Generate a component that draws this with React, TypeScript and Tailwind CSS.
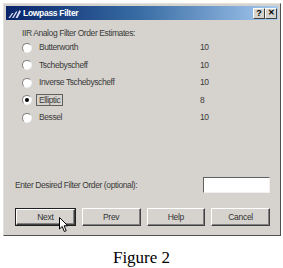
import React from "react";

const Radio = ({ checked }: { checked?: boolean }) => (
  <div className="w-[10px] h-[10px] rounded-full bg-white border border-[#808080] border-r-[#f0f0f0] border-b-[#f0f0f0] flex items-center justify-center shrink-0">
    {checked && <div className="w-[4px] h-[4px] rounded-full bg-black" />}
  </div>
);

const rows = [
  { name: "Butterworth", n: "10" },
  { name: "Tschebyscheff", n: "10" },
  { name: "Inverse Tschebyscheff", n: "10" },
  { name: "Elliptic", n: "8", checked: true },
  { name: "Bessel", n: "10" },
];

const Btn = ({ label, children }: { label: string; children?: React.ReactNode }) => (
  <div className="relative h-full w-full bg-[#d6d3ce] border border-t-white border-l-white border-r-[#404040] border-b-[#404040] shadow-[inset_-1px_-1px_0_#808080] flex items-center justify-center text-[8.5px] tracking-[-0.3px] text-[#333]">
    {label}
    {children}
  </div>
);

export default function App() {
  return (
    <div className="w-[283px] h-[268px] bg-white relative" style={{ fontFamily: "'Liberation Sans', Arial, sans-serif" }}>
      <div className="absolute left-[3px] top-[3px] w-[278px] h-[233px] bg-[#d6d3ce] border border-t-[#e4e2dc] border-l-[#e4e2dc] border-r-[#505050] border-b-[#505050] p-[2px] flex flex-col">
        <div className="h-[14px] shrink-0 flex items-center bg-gradient-to-r from-[#0a246a] via-[#3a6ea5] to-[#a6caf0] pl-[2px] pr-[1px]">
          <svg width="14" height="9" viewBox="0 0 14 9">
            <path d="M0.5 9 L4 4 L5.5 4 L2 9 Z" fill="#dcdcf0" />
            <path d="M4 9 L8 2.5 L9.5 2.5 L5.5 9 Z" fill="#dcdcf0" />
            <path d="M7.5 9 L11.5 1 L13 2.5 L9.5 9 Z" fill="#dcdcf0" />
          </svg>
          <span className="ml-[1px] text-white font-bold text-[8.5px] tracking-[-0.3px] leading-none">Lowpass Filter</span>
          <div className="ml-auto flex">
            <div className="w-[12px] h-[11px] bg-[#d6d3ce] border border-t-white border-l-white border-r-[#404040] border-b-[#404040] flex items-center justify-center text-[9px] font-bold leading-none text-black">?</div>
            <div className="w-[12px] h-[11px] bg-[#d6d3ce] border border-t-white border-l-white border-r-[#404040] border-b-[#404040] flex items-center justify-center text-[8px] font-bold leading-none text-black">✕</div>
          </div>
        </div>
        <div className="flex-1 flex flex-col pl-[9px] pr-[8px] pt-[7px] text-[8.5px] tracking-[-0.4px] text-[#3a3a3a]">
          <div className="pl-[7px] leading-[12px]">IIR Analog Filter Order Estimates:</div>
          <div className="flex flex-col mt-[2px] gap-[4.5px]">
            {rows.map((r) => (
              <div key={r.name} className="flex items-center h-[13px] pl-[7px]">
                <Radio checked={r.checked} />
                <div className="ml-[7px] w-[161px]">
                  <span className={r.checked ? "border border-[#606060] px-[2px] -ml-[3px]" : ""}>{r.name}</span>
                </div>
                <span>{r.n}</span>
              </div>
            ))}
          </div>
          <div className="flex items-center mt-[53px]">
            <span className="flex-1">Enter Desired Filter Order (optional):</span>
            <div className="w-[67px] h-[16px] bg-white border border-t-[#606060] border-l-[#606060] border-r-[#f0f0f0] border-b-[#f0f0f0]" />
          </div>
          <div className="flex gap-[6px] mt-[15px] h-[18px]">
            <div className="relative flex-1 border border-[#202020]">
              <Btn label="Next">
                <svg className="absolute left-[42px] top-[7px] z-10" width="10" height="16" viewBox="0 0 10 16">
                  <path d="M0.5 0.5 L0.5 12 L3.2 9.5 L5.3 14.5 L7.2 13.7 L5.1 8.8 L8.8 8.8 Z" fill="white" stroke="black" strokeWidth="1" />
                </svg>
              </Btn>
            </div>
            <div className="flex-1"><Btn label="Prev" /></div>
            <div className="flex-1"><Btn label="Help" /></div>
            <div className="flex-1"><Btn label="Cancel" /></div>
          </div>
        </div>
      </div>
      <div className="absolute left-0 right-0 top-[245px] text-center text-[17px] text-black" style={{ fontFamily: "'Liberation Serif', 'Times New Roman', serif" }}>
        Figure 2
      </div>
    </div>
  );
}
